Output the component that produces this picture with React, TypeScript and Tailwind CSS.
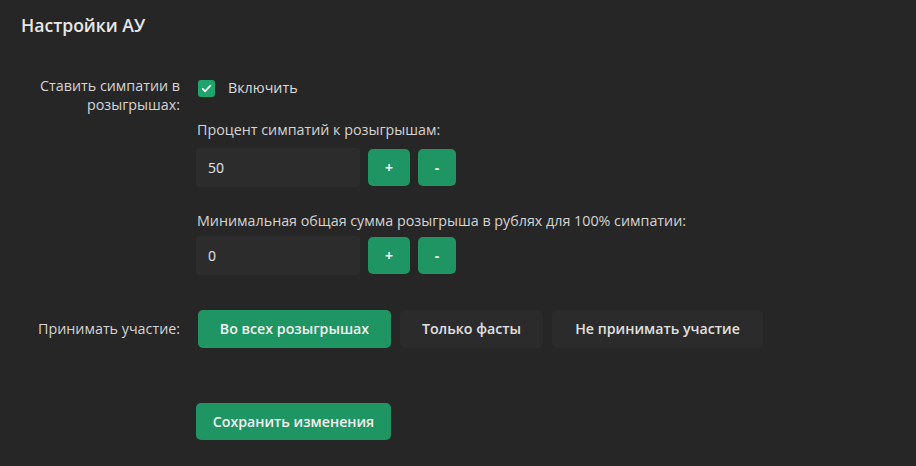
import { useState } from 'react';

const participationOptions = ['Во всех розыгрышах', 'Только фасты', 'Не принимать участие'];

function NumberField({ value, onChange }: { value: number; onChange: (v: number) => void }) {
  return (
    <div className="flex items-center gap-2">
      <input
        value={value}
        onChange={(e) => onChange(Number(e.target.value) || 0)}
        className="h-[39px] w-[164px] rounded-[3px] bg-[#2c2c2c] px-3 text-[14px] text-[#e6e6e6] outline-none"
      />
      <button
        onClick={() => onChange(value + 1)}
        className="h-[37px] w-[42px] rounded-[5px] bg-[#1f9563] text-[14px] font-bold text-[#f0f0f0]"
      >
        +
      </button>
      <button
        onClick={() => onChange(Math.max(0, value - 1))}
        className="h-[37px] w-[38px] rounded-[5px] bg-[#1f9563] text-[14px] font-bold text-[#f0f0f0]"
      >
        -
      </button>
    </div>
  );
}

export default function App() {
  const [enabled, setEnabled] = useState(true);
  const [percent, setPercent] = useState(50);
  const [minSum, setMinSum] = useState(0);
  const [mode, setMode] = useState(0);

  return (
    <div className="min-h-[466px] w-full bg-[#262626] font-['Open_Sans',sans-serif] text-[14.3px] text-[#d4d4d4]">
      <div className="px-[21px] pt-[13px]">
        <h1 className="text-[17.6px] font-semibold leading-[24px] text-[#e8e8e8]">Настройки АУ</h1>
      </div>

      <div className="mt-[39px] grid grid-cols-[180px_1fr] gap-x-[16px]">
        <div className="text-right leading-[19px]">
          Ставить симпатии в
          <br />
          розыгрышах:
        </div>
        <div className="flex flex-col">
          <label className="flex h-[24px] cursor-pointer items-center gap-[13px] pl-[2px]">
            <button
              onClick={() => setEnabled((v) => !v)}
              className={`flex h-[17px] w-[17px] items-center justify-center rounded-[3px] ${
                enabled ? 'bg-[#1ea46c]' : 'bg-[#3a3a3a]'
              }`}
            >
              {enabled ? (
                <svg viewBox="0 0 16 16" className="h-[11px] w-[11px]" fill="none" stroke="white" strokeWidth={2.6}>
                  <path d="M2.5 8.5l3.5 3.5 7.5-8" strokeLinecap="round" strokeLinejoin="round" />
                </svg>
              ) : null}
            </button>
            <span className="text-[#dcdcdc]">Включить</span>
          </label>

          <div className="mt-[20px] pl-[1px] leading-[19px]">Процент симпатий к розыгрышам:</div>
          <div className="mt-[9px]">
            <NumberField value={percent} onChange={setPercent} />
          </div>

          <div className="mt-[24px] pl-[1px] leading-[19px]">
            Минимальная общая сумма розыгрыша в рублях для 100% симпатии:
          </div>
          <div className="mt-[6px]">
            <NumberField value={minSum} onChange={setMinSum} />
          </div>
        </div>

        <div className="mt-[35px] flex h-[38px] items-center justify-end">Принимать участие:</div>
        <div className="mt-[35px] flex items-center gap-[9px] pl-[2px]">
          {participationOptions.map((option, i) => (
            <button
              key={option}
              onClick={() => setMode(i)}
              className={`h-[38px] rounded-[5px] text-[14.2px] font-semibold ${
                mode === i ? 'bg-[#1f9563] text-[#f2f2f2]' : 'bg-[#2b2b2b] text-[#e0e0e0]'
              } ${i === 0 ? 'w-[193px]' : i === 1 ? 'w-[143px]' : 'w-[211px]'}`}
            >
              {option}
            </button>
          ))}
        </div>

        <div />
        <div className="mt-[55px]">
          <button className="h-[37px] w-[195px] rounded-[5px] bg-[#1f9563] text-[14.2px] font-semibold text-[#f2f2f2]">
            Сохранить изменения
          </button>
        </div>
      </div>
    </div>
  );
}
